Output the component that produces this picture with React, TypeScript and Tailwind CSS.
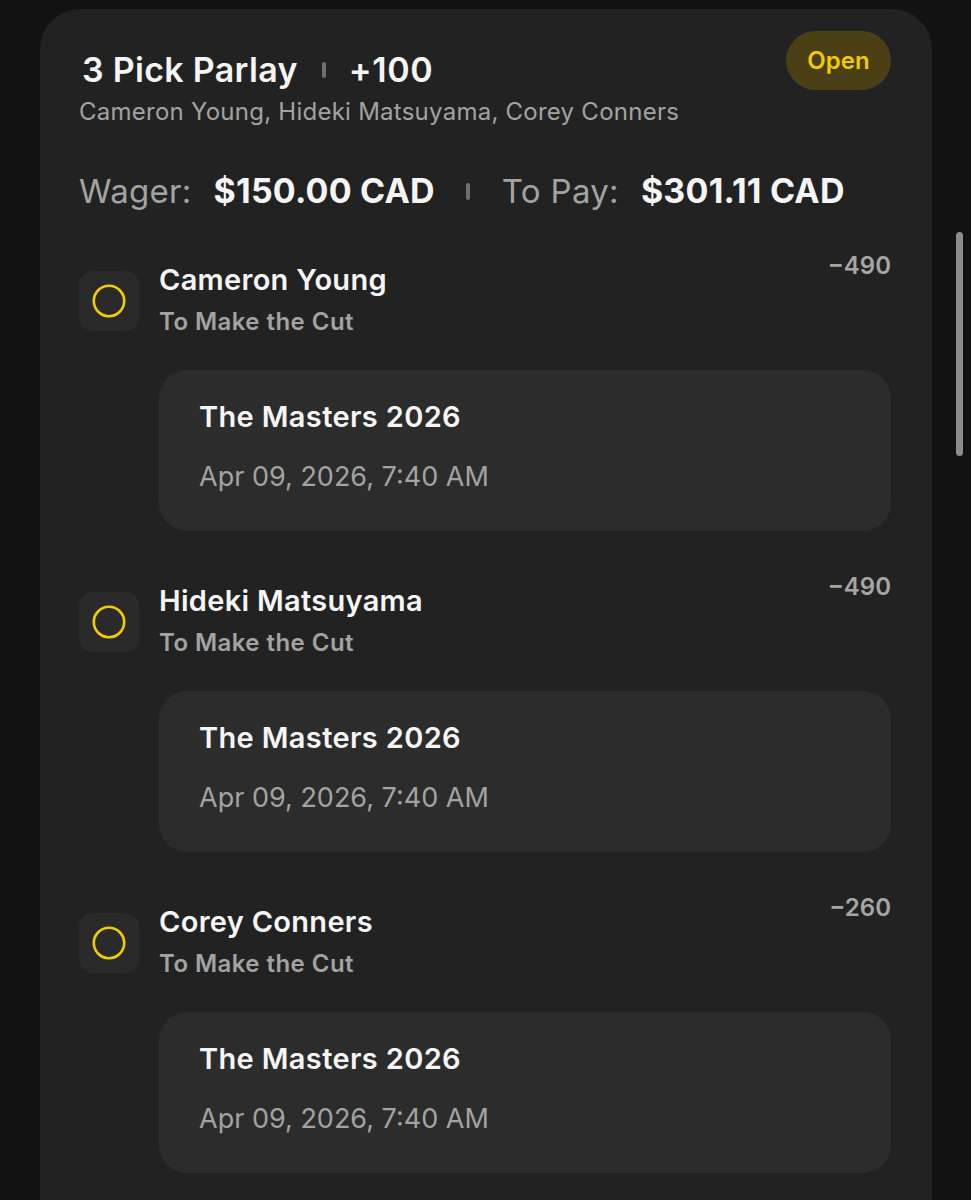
import React from "react";

const legs = [
  { name: "Cameron Young", odds: "−490" },
  { name: "Hideki Matsuyama", odds: "−490" },
  { name: "Corey Conners", odds: "−260" },
];

function Divider({ className }: { className: string }) {
  return <span className={`inline-block w-[4px] rounded-full bg-[#6f6f6f] ${className}`} />;
}

function PendingIcon() {
  return (
    <div className="mt-[20px] flex h-[60px] w-[60px] shrink-0 items-center justify-center rounded-[14px] bg-[#2a2a2a]">
      <svg width="34" height="34" viewBox="0 0 34 34" fill="none">
        <circle cx="17" cy="17" r="15.2" stroke="#f2cd00" strokeWidth="2.6" />
      </svg>
    </div>
  );
}

function Leg({ name, odds }: { name: string; odds: string }) {
  return (
    <div className="flex gap-[20px]">
      <PendingIcon />
      <div className="flex-1">
        <div className="flex items-start justify-between">
          <div className="pt-[11px]">
            <p className="text-[29px] font-semibold leading-[36px] tracking-[0.3px] text-[#f5f5f5]">{name}</p>
            <p className="mt-[9px] text-[24px] font-semibold leading-[30px] tracking-[0.45px] text-[#a3a3a3]">
              To Make the Cut
            </p>
          </div>
          <span className="text-[24px] font-semibold leading-[30px] text-[#a6a6a6]">{odds}</span>
        </div>
        <div className="mt-[33px] rounded-[28px] bg-[#2c2c2c] px-[40px] pb-[37px] pt-[29px]">
          <p className="text-[29px] font-semibold leading-[36px] tracking-[0.35px] text-[#f5f5f5]">The Masters 2026</p>
          <p className="mt-[25px] text-[27px] leading-[34px] text-[#a3a3a3]">Apr 09, 2026, 7:40 AM</p>
        </div>
      </div>
    </div>
  );
}

export default function App() {
  return (
    <div
      className="relative h-[1200px] overflow-hidden bg-[#121212] pt-[9px]"
      style={{ fontFamily: "Inter, 'Noto Sans', sans-serif" }}
    >
      <div className="ml-[40px] min-h-[1191px] w-[892px] rounded-t-[40px] bg-[#222222] pb-[40px] pl-[39px] pr-[41px] pt-[22px]">
        <div className="flex items-start justify-between">
          <div className="pt-[19px]">
            <div className="flex items-center">
              <h1 className="pl-[3px] text-[34px] font-semibold leading-[40px] tracking-[0.3px] text-[#f5f5f5]">
                3 Pick Parlay
              </h1>
              <Divider className="ml-[24px] mr-[23px] h-[16px]" />
              <span className="text-[34px] font-semibold leading-[40px] tracking-[0.6px] text-[#f5f5f5]">+100</span>
            </div>
            <p className="mt-[7px] text-[24px] leading-[30px] tracking-[0.25px] text-[#a3a3a3]">
              Cameron Young, Hideki Matsuyama, Corey Conners
            </p>
          </div>
          <span className="flex h-[59px] w-[105px] items-center justify-center rounded-full bg-[#4a3f15] text-[24px] font-semibold text-[#f0cc00]">
            Open
          </span>
        </div>

        <div className="mt-[42px] flex items-center text-[33px] leading-[44px]">
          <span className="tracking-[0.3px] text-[#a3a3a3]">Wager:</span>
          <span className="ml-[22px] text-[34px] font-bold tracking-[0.2px] text-[#f5f5f5]">$150.00 CAD</span>
          <Divider className="ml-[31px] mr-[32px] h-[17px]" />
          <span className="tracking-[0.3px] text-[#a3a3a3]">To Pay:</span>
          <span className="ml-[22px] text-[34px] font-bold tracking-[0.2px] text-[#f5f5f5]">$301.11 CAD</span>
        </div>

        <div className="mt-[38px] flex flex-col gap-[41px]">
          {legs.map((leg) => (
            <Leg key={leg.name} name={leg.name} odds={leg.odds} />
          ))}
        </div>
      </div>

      <div className="absolute left-[956px] top-[232px] h-[224px] w-[7px] rounded-full bg-[#8c8c8c]" />
    </div>
  );
}
